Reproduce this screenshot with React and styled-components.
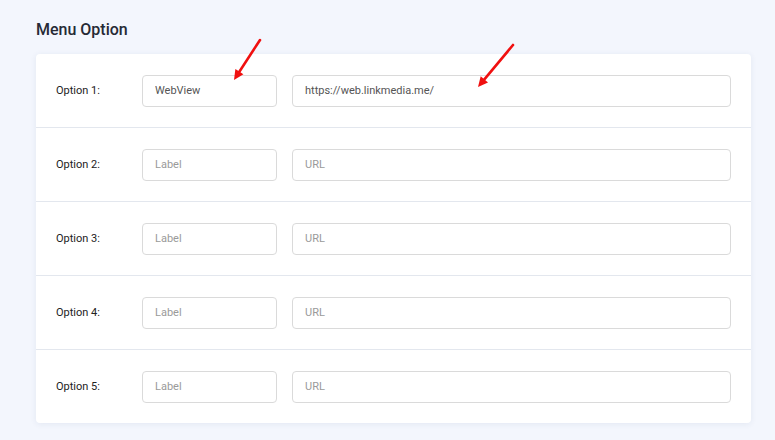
import React from "react";
import styled, { createGlobalStyle } from "styled-components";

const GlobalStyle = createGlobalStyle`
  html, body {
    margin: 0;
    padding: 0;
    background: #f3f6fd;
  }
  body {
    font-family: Roboto, "Noto Sans", "Liberation Sans", sans-serif;
  }
`;

const options = [
  { label: "WebView", url: "https://web.linkmedia.me/" },
  { label: "", url: "" },
  { label: "", url: "" },
  { label: "", url: "" },
  { label: "", url: "" },
];

// red pointer arrows drawn over the first row
const arrows = [
  { x1: 260, y1: 40, x2: 234, y2: 80 },
  { x1: 513, y1: 45, x2: 478, y2: 87 },
];

function Arrow({ x1, y1, x2, y2 }) {
  const ang = Math.atan2(y2 - y1, x2 - x1);
  const len = 11;
  const spread = 0.45;
  const ax = x2 - len * Math.cos(ang - spread);
  const ay = y2 - len * Math.sin(ang - spread);
  const bx = x2 - len * Math.cos(ang + spread);
  const by = y2 - len * Math.sin(ang + spread);
  const sx = x2 - 8 * Math.cos(ang);
  const sy = y2 - 8 * Math.sin(ang);
  return (
    <g>
      <line x1={x1} y1={y1} x2={sx} y2={sy} stroke="#f01010" strokeWidth="2.6" strokeLinecap="round" />
      <polygon points={`${x2},${y2} ${ax},${ay} ${bx},${by}`} fill="#f01010" />
    </g>
  );
}

function App() {
  return (
    <Page>
      <GlobalStyle />
      <Title>Menu Option</Title>
      <Card>
        {options.map((opt, i) => (
          <Row key={i} last={i === options.length - 1}>
            <RowLabel>Option {i + 1}:</RowLabel>
            <Field width="135px" placeholder="Label" defaultValue={opt.label} />
            <Field placeholder="URL" defaultValue={opt.url} />
          </Row>
        ))}
      </Card>
      <Overlay width="775" height="440" viewBox="0 0 775 440">
        {arrows.map((a, i) => (
          <Arrow key={i} {...a} />
        ))}
      </Overlay>
    </Page>
  );
}

export default App;

const Page = styled.div`
  position: relative;
  padding: 20px 24px 16px 36px;
  min-height: 440px;
  box-sizing: border-box;
`;

const Title = styled.h2`
  margin: 0 0 14px;
  font-size: 16px;
  line-height: 20px;
  font-weight: 500;
  color: #262a35;
`;

const Card = styled.div`
  background: #fff;
  border-radius: 4px;
  box-shadow: 0 1px 6px rgba(40, 60, 110, 0.08);
`;

const Row = styled.div`
  display: flex;
  align-items: center;
  height: 73px;
  padding: 0 20px;
  border-bottom: ${(p) => (p.last ? "none" : "1px solid #e3e7ee")};
`;

const RowLabel = styled.div`
  width: 86px;
  flex-shrink: 0;
  font-size: 11px;
  color: #222;
`;

const Field = styled.input`
  box-sizing: border-box;
  height: 32px;
  width: ${(p) => p.width || "auto"};
  flex: ${(p) => (p.width ? "0 0 auto" : "1")};
  margin-right: ${(p) => (p.width ? "15px" : "0")};
  padding: 0 12px;
  border: 1px solid #dadada;
  border-radius: 4px;
  font-family: Roboto, "Noto Sans", "Liberation Sans", sans-serif;
  font-size: 11px;
  color: #555;
  outline: none;
  &::placeholder {
    color: #9a9a9a;
  }
`;

const Overlay = styled.svg`
  position: absolute;
  left: 0;
  top: 0;
  pointer-events: none;
`;
